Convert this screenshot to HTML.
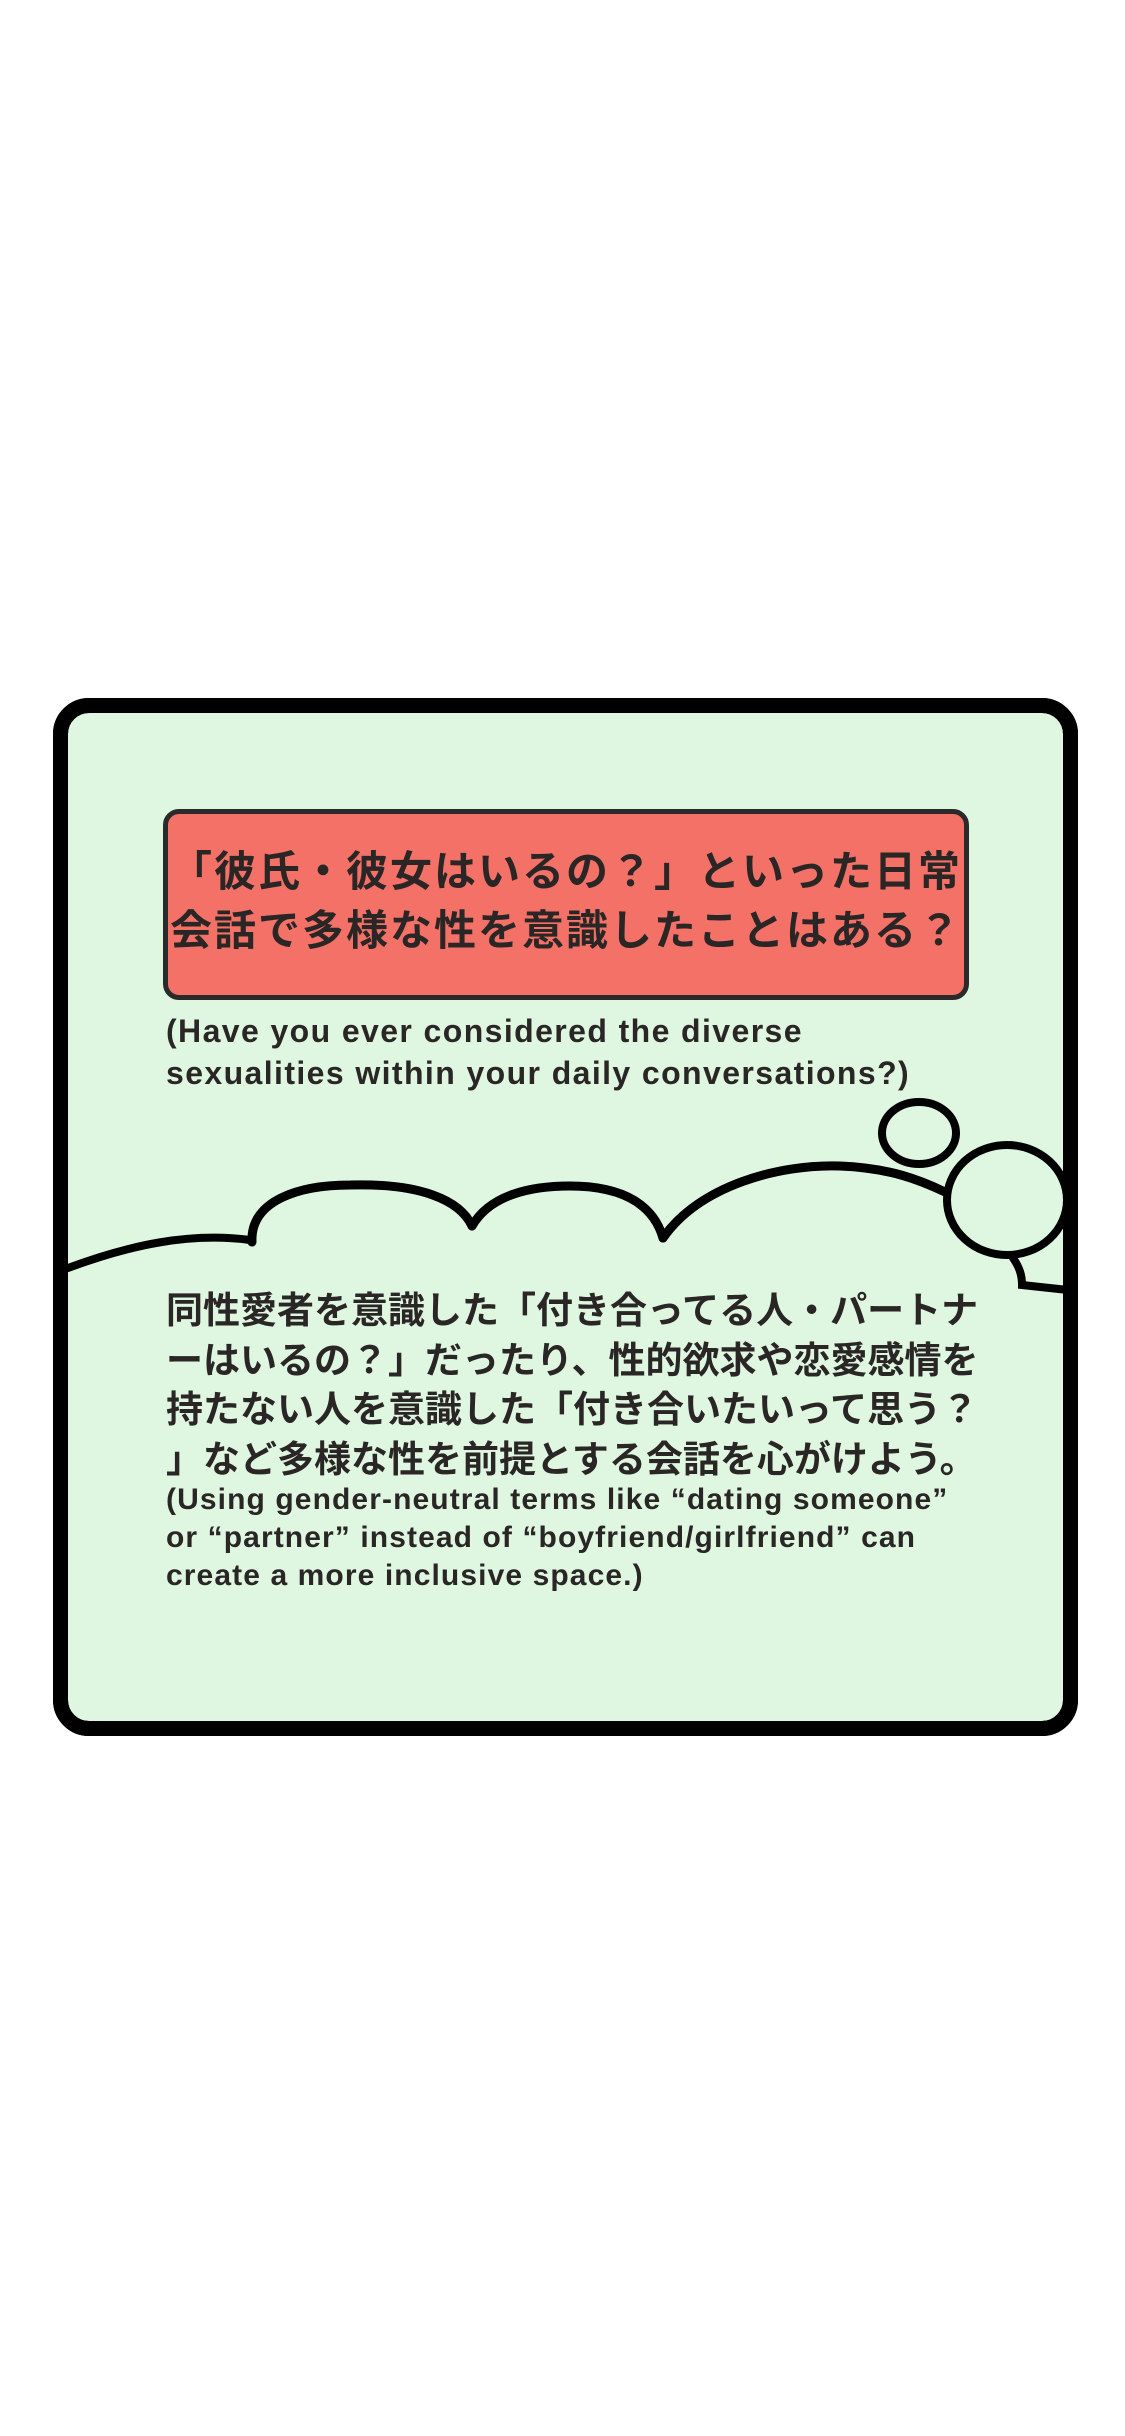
<!DOCTYPE html>
<html><head><meta charset="utf-8"><style>
html,body{margin:0;padding:0;background:#fff;width:1125px;height:2436px;overflow:hidden;position:relative}
.box{position:absolute;left:53px;top:698px;width:995px;height:1008px;border:15px solid #000;border-radius:36px;background:#dff7e1}
.red{position:absolute;left:163px;top:809px;width:796px;height:181px;border:5px solid #2a2a2a;border-radius:16px;background:#f37167}
.t{position:absolute;font-family:"Liberation Sans","Noto Sans CJK JP",sans-serif;font-weight:bold;color:#2a2626;white-space:nowrap}
svg{position:absolute;left:0;top:0}
</style></head><body>
<div class="box"></div>
<div class="red"></div>
<div class="t" style="left:170px;top:842px;font-size:42px;line-height:59px;letter-spacing:2px">「彼氏・彼女はいるの？」といった日常<br>会話で多様な性を意識したことはある？</div>
<div class="t" style="left:166px;top:1010px;font-size:32px;line-height:42px;letter-spacing:1.4px">(Have you ever considered the diverse<br>sexualities within your daily conversations?)</div>
<svg width="1125" height="2436" viewBox="0 0 1125 2436">
<g fill="none" stroke="#000" stroke-linecap="round">
<path d="M68 1268 C130 1245 190 1232 250 1240" stroke-width="8"/>
<path d="M252 1242 C250 1200 300 1185 350 1185 C420 1183 460 1200 472 1226" stroke-width="9"/>
<path d="M472 1226 C490 1195 530 1186 570 1186 C630 1186 655 1210 663 1238" stroke-width="9"/>
<path d="M663 1238 C700 1185 780 1164 840 1166 C890 1168 920 1180 945 1192" stroke-width="9"/>
<ellipse cx="919" cy="1133" rx="37" ry="31" stroke-width="8"/>
<ellipse cx="1007" cy="1200" rx="60" ry="55" stroke-width="8"/>
<path d="M1013 1258 C1020 1268 1022 1276 1022 1285 L1068 1290" stroke-width="8"/>
</g>
</svg>
<div class="box" style="background:none"></div>
<div class="t" style="left:166px;top:1286px;font-size:37px;line-height:49.5px">同性愛者を意識した「付き合ってる人・パートナ<br>ーはいるの？」だったり、性的欲求や恋愛感情を<br>持たない人を意識した「付き合いたいって思う？<br>」など多様な性を前提とする会話を心がけよう。</div>
<div class="t" style="left:166px;top:1481px;font-size:30px;line-height:38px;letter-spacing:1.1px">(Using gender-neutral terms like “dating someone”<br>or “partner” instead of “boyfriend/girlfriend” can<br>create a more inclusive space.)</div>
</body></html>
